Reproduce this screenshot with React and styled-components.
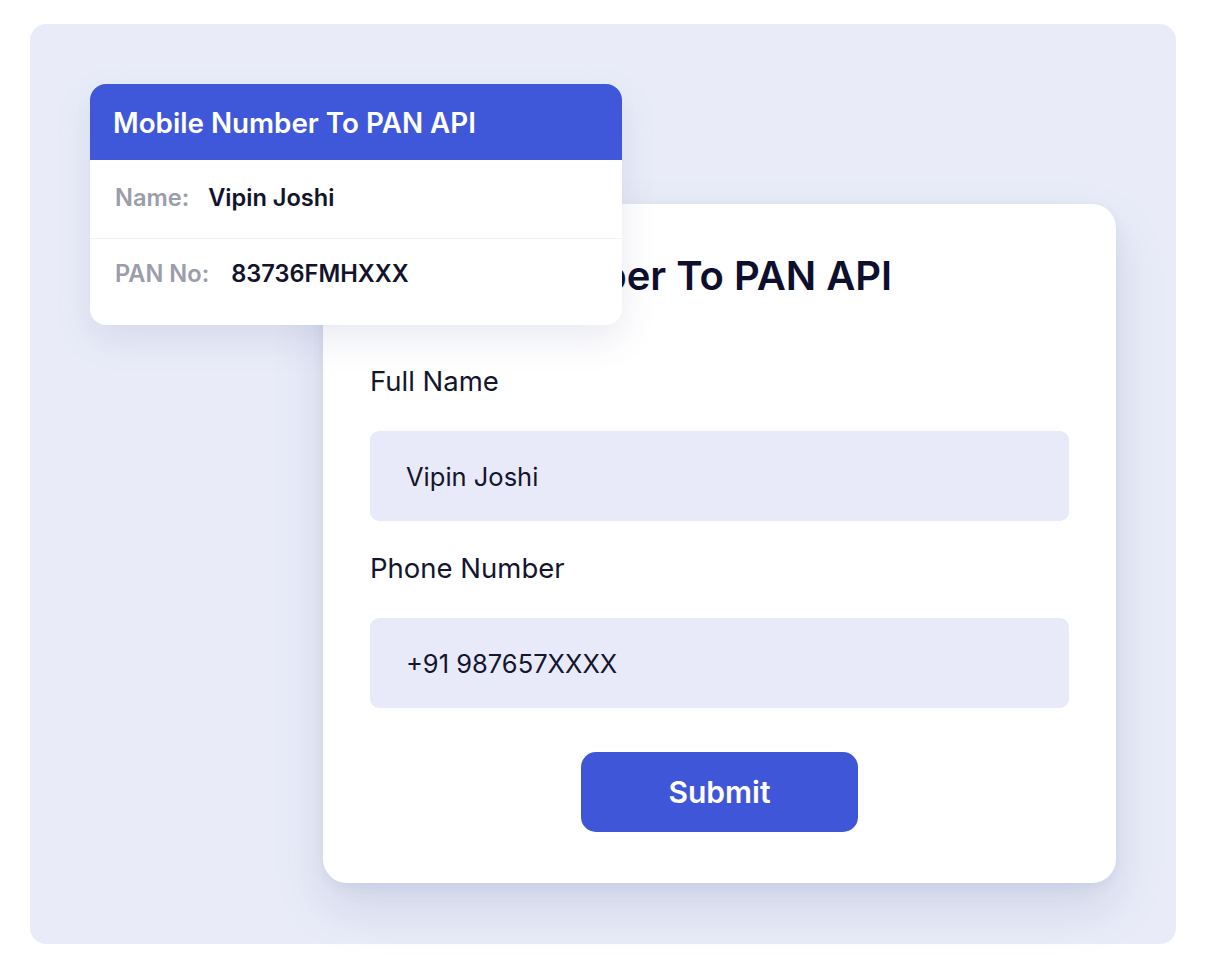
import React from "react";
import styled, { createGlobalStyle } from "styled-components";

const GlobalStyle = createGlobalStyle`
  html, body { margin: 0; padding: 0; background: #ffffff; }
  body { font-family: Inter, "Noto Sans", "Liberation Sans", sans-serif; -webkit-font-smoothing: antialiased; }
  * { box-sizing: border-box; }
`;

const Page = styled.div`
  padding: 24px 30px 35px;
`;

const Panel = styled.section`
  position: relative;
  height: 920px;
  background: #e9ecf8;
  border-radius: 16px;
  padding: 180px 0 0 293px;
`;

const FormCard = styled.div`
  width: 793px;
  height: 679px;
  background: #ffffff;
  border-radius: 24px;
  box-shadow: 0 24px 50px rgba(70, 80, 140, 0.16), 0 4px 14px rgba(70, 80, 140, 0.06);
  padding: 48px 47px 51px;
  display: flex;
  flex-direction: column;
`;

const Title = styled.h2`
  margin: 0 0 65px;
  font-size: 40px;
  line-height: 48px;
  font-weight: 600;
  color: #0e0f2c;
`;

const Field = styled.div`
  display: flex;
  flex-direction: column;
  gap: 34px;
  margin-bottom: ${(p) => p.$mb}px;
`;

const Label = styled.label`
  font-size: 27.5px;
  line-height: 32px;
  font-weight: 400;
  color: #14152e;
`;

const InputBox = styled.div`
  height: 90px;
  border-radius: 9px;
  background: #e9eaf9;
  display: flex;
  align-items: center;
  padding: 0 36px;
  font-size: 25.5px;
  color: #14152e;
`;

const ButtonRow = styled.div`
  display: flex;
  justify-content: center;
`;

const SubmitButton = styled.button`
  width: 277px;
  height: 80px;
  border: none;
  border-radius: 15px;
  background: #3f56d8;
  color: #ffffff;
  font-family: inherit;
  font-size: 30px;
  font-weight: 600;
  cursor: pointer;
`;

const ResultCard = styled.div`
  position: absolute;
  top: 60px;
  left: 60px;
  width: 532px;
  background: #ffffff;
  border-radius: 16px;
  overflow: hidden;
  box-shadow: 0 14px 36px rgba(70, 80, 140, 0.12);
`;

const ResultHeader = styled.div`
  height: 76px;
  background: #3f57d9;
  color: #ffffff;
  display: flex;
  align-items: center;
  padding: 2px 23px 0;
  font-size: 27.8px;
  font-weight: 600;
`;

const Row = styled.div`
  display: flex;
  align-items: center;
  padding: 24px 25px 26px;
  border-bottom: 1px solid #f0f1f6;
  line-height: 28px;
  font-size: 23.6px;
  font-weight: 600;
  &:last-child {
    border-bottom: none;
    padding: 21px 25px 37px;
  }
`;

const RowLabel = styled.span`
  color: #9b9dab;
  margin-right: ${(p) => p.$gap}px;
`;

const RowValue = styled.span`
  color: #12132c;
`;

export default function App() {
  return (
    <>
      <GlobalStyle />
      <Page>
        <Panel>
          <FormCard>
            <Title>Mobile Number To PAN API</Title>
            <Field $mb={31}>
              <Label>Full Name</Label>
              <InputBox>Vipin Joshi</InputBox>
            </Field>
            <Field $mb={44}>
              <Label>Phone Number</Label>
              <InputBox>+91 987657XXXX</InputBox>
            </Field>
            <ButtonRow>
              <SubmitButton>Submit</SubmitButton>
            </ButtonRow>
          </FormCard>
          <ResultCard>
            <ResultHeader>Mobile Number To PAN API</ResultHeader>
            <Row>
              <RowLabel $gap={19}>Name:</RowLabel>
              <RowValue>Vipin Joshi</RowValue>
            </Row>
            <Row>
              <RowLabel $gap={22}>PAN No:</RowLabel>
              <RowValue>83736FMHXXX</RowValue>
            </Row>
          </ResultCard>
        </Panel>
      </Page>
    </>
  );
}
